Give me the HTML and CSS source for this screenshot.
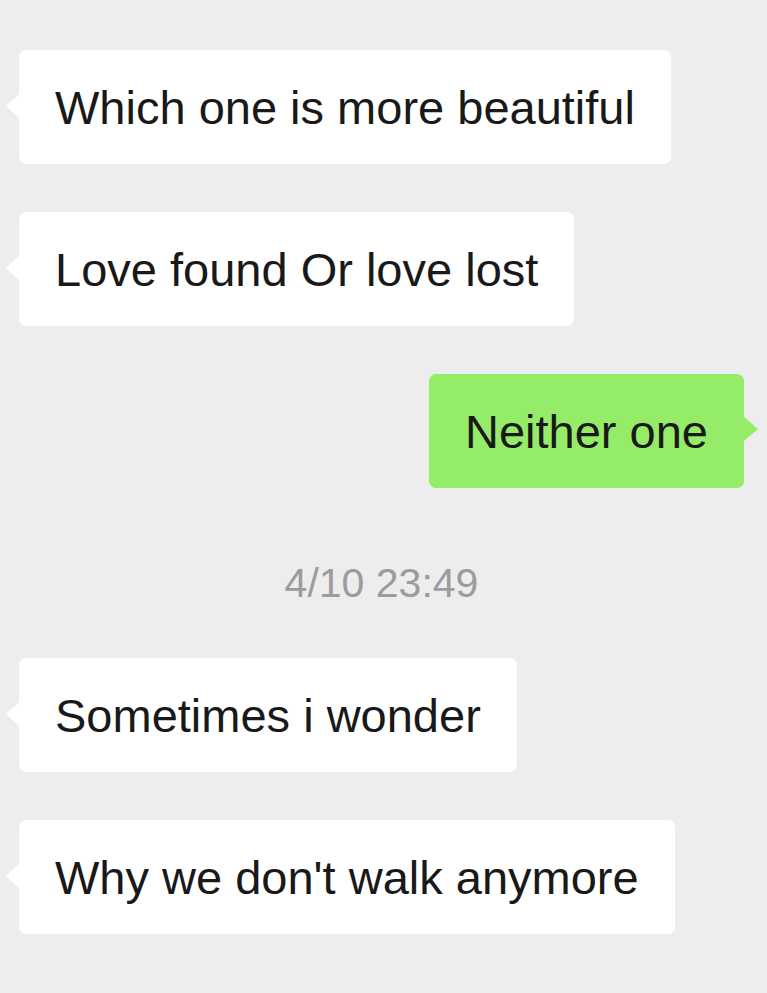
FILE: index.html
```html
<!DOCTYPE html>
<html>
<head>
<meta charset="utf-8">
<link rel="stylesheet" href="styles.css">
</head>
<body>
<div class="chat">
  <div class="row left first"><div class="bubble in">Which one is more beautiful</div></div>
  <div class="row left"><div class="bubble in">Love found Or love lost</div></div>
  <div class="row right"><div class="bubble out">Neither one</div></div>
  <div class="time">4/10 23:49</div>
  <div class="row left"><div class="bubble in">Sometimes i wonder</div></div>
  <div class="row left"><div class="bubble in">Why we don't walk anymore</div></div>
</div>
</body>
</html>
```

FILE: styles.css
```css
html, body {
  margin: 0;
  padding: 0;
  background: #ededed;
}
body {
  width: 767px;
  height: 993px;
  overflow: hidden;
  font-family: "Liberation Sans", Arial, sans-serif;
}
.chat {
  display: flex;
  flex-direction: column;
  padding: 50px 23px 0 19px;
}
.row {
  display: flex;
  margin-bottom: 48px;
}
.row.left { justify-content: flex-start; }
.row.right { justify-content: flex-end; }
.bubble {
  position: relative;
  box-sizing: border-box;
  height: 114px;
  padding: 0 36px;
  display: flex;
  align-items: center;
  font-size: 47px;
  color: #191919;
  border-radius: 7px;
  white-space: nowrap;
}
.bubble.in { background: #ffffff; }
.bubble.out { background: #95ec69; }
.bubble.in::before {
  content: "";
  position: absolute;
  left: -13px;
  top: 44px;
  border-top: 12px solid transparent;
  border-bottom: 12px solid transparent;
  border-right: 13px solid #ffffff;
}
.bubble.out::after {
  content: "";
  position: absolute;
  right: -14px;
  top: 43px;
  border-top: 12px solid transparent;
  border-bottom: 12px solid transparent;
  border-left: 14px solid #95ec69;
}
.time {
  text-align: center;
  font-size: 41px;
  color: #9c9c9c;
  height: 48px;
  line-height: 48px;
  margin: 23px 0 51px;
}
```
